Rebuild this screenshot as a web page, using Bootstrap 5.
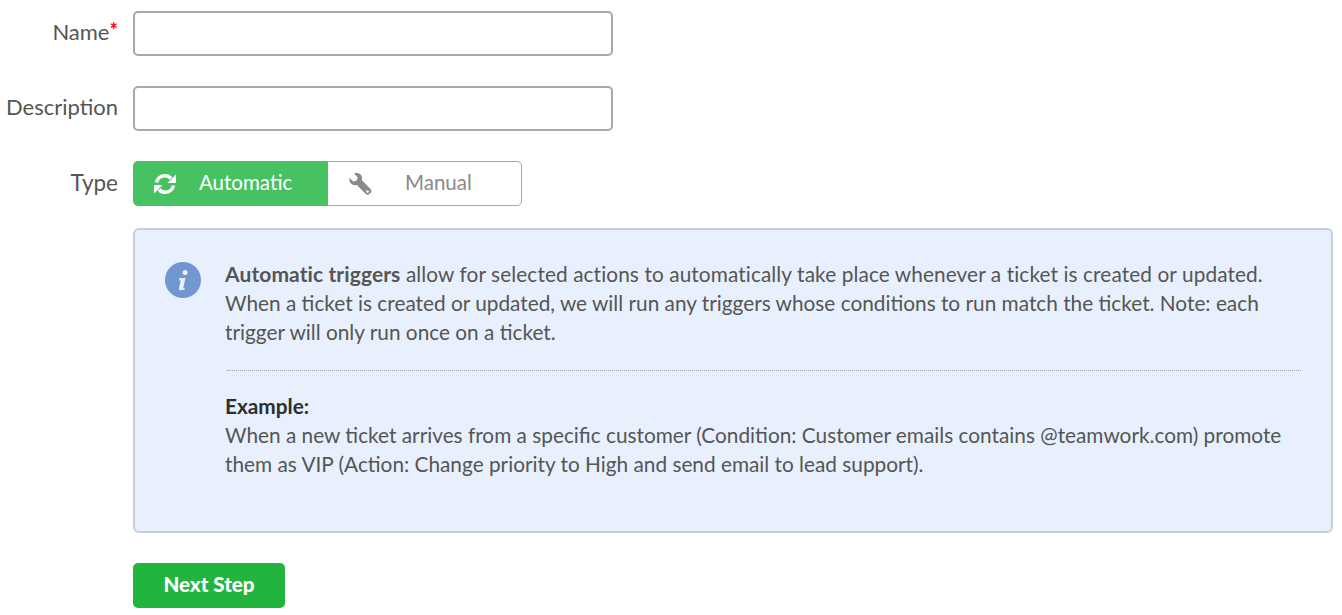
<!DOCTYPE html>
<html lang="en">
<head>
<meta charset="utf-8">
<title>Trigger</title>
<link rel="stylesheet" href="https://cdn.jsdelivr.net/npm/bootstrap@5.3.0/dist/css/bootstrap.min.css">
<style>
body{font-family:"Lato","Liberation Sans",sans-serif;color:#555;font-size:20px;background:#fff;overflow:hidden}
.page-wrap{padding:11px 9px 0 0}
.field-row{display:flex;gap:15px;margin-bottom:30px}
.field-row.type-row{margin-bottom:22px}
.field-label{width:118px;flex:none;text-align:right;font-size:22px;line-height:42px;margin:0;color:#555}
.type-row .field-label{line-height:44px;font-size:22.500px}
.req{color:#f00;font-size:20px;font-weight:700;vertical-align:2px;line-height:0}
.text-in.form-control{width:480px;height:45px;border:2px solid #a8a8a8;border-radius:5px;box-shadow:none}
.toggle-wrap{display:flex;width:389px;height:45px}
.toggle-on,.toggle-off{display:flex;align-items:center;font-size:20.500px;padding:0 0 3px}
.toggle-on{width:195px;background:#46c263;color:#fff;border-radius:5px 0 0 5px;border:0;padding-left:20px}
.toggle-off{width:194px;background:#fff;color:#8a8a8a;border:1px solid #a8a8a8;border-left:0;border-radius:0 5px 5px 0;padding-left:20px}
.toggle-on svg{margin-right:22px;margin-top:3px}
.toggle-off svg{margin-right:33px;margin-top:3px}
.info-box{margin-left:133px;width:1200px;height:305px;background:#e8f0fd;border:2px solid #c8cfdc;border-radius:6px;padding:29px 30px 0 30px;display:flex;gap:24px;margin-bottom:30px}
.info-ico{flex:none;margin-top:3px}
.info-text{font-size:20.800px;line-height:29px;color:#555;flex:1}
.info-text p{margin:0}
.info-text strong{font-weight:700;font-size:21px}
.first-line{letter-spacing:.1px}
.dot-rule{border:0;border-top:1px dotted #a0a5ac;opacity:1;margin:24px 0 20px 2px}
.ex-head{font-weight:700;color:#2e2e2e}
.next-btn.btn{margin-left:133px;width:152px;height:45px;background:#22b53e;border:0;border-radius:5px;color:#fff;font-weight:900;font-size:20.500px;padding:0 0 3px}
</style>
</head>
<body>
<form class="page-wrap">
  <div class="field-row">
    <label class="field-label" for="fn">Name<span class="req">*</span></label>
    <input id="fn" class="form-control text-in" type="text">
  </div>
  <div class="field-row">
    <label class="field-label" for="fd">Description</label>
    <input id="fd" class="form-control text-in" type="text">
  </div>
  <div class="field-row type-row">
    <div class="field-label">Type</div>
    <div class="toggle-wrap">
      <div class="toggle-on">
        <svg width="24" height="24" viewBox="0 0 24 24"><g fill="none" stroke="#fff" stroke-width="3.600"><path d="M3.500 10.500C4.300 6.500 7.800 3.800 12 3.800c2.600 0 4.600 1 6 2.700"/><path d="M20.500 13.500c-.8 4-4.300 6.700-8.500 6.700-2.600 0-4.600-1-6-2.700"/></g><path d="M23 2.500v8.500h-8.500z" fill="#fff"/><path d="M1 21.500V13h8.500z" fill="#fff"/></svg>
        <span>Automatic</span>
      </div>
      <div class="toggle-off">
        <svg width="24" height="24" viewBox="0 0 24 24" fill="#8a8a8a"><path d="M1.500 6l3.800 3.600 3.400-1 1-3.400L6 1.500c2.800-1 5.800-.3 7.200 1.700 1 1.500 1.100 3.300.5 4.900l8.800 8.800c1.200 1.200 1.200 3 0 4.200l-.7.700c-1.200 1.200-3 1.200-4.200 0L8.800 12.900c-1.700.6-3.600.4-5-.7C1.700 10.800 1 8.400 1.500 6z"/><circle cx="19.500" cy="19.500" r="1.300" fill="#fff"/></svg>
        <span>Manual</span>
      </div>
    </div>
  </div>
  <div class="info-box">
    <svg class="info-ico" width="36" height="36" viewBox="0 0 36 36"><circle cx="18" cy="18" r="18" fill="#7097cf"/><circle cx="20" cy="10.500" r="2.500" fill="#e8f0fd"/><path d="M14.500 16h6l-2.200 9.500c-.1.600.5.700 1.200.3l.4 1.400c-1.500 1-3.400 1.400-4.800 1-.9-.3-1.300-1-1.100-2l1.700-7.700-1.600-.3z" fill="#e8f0fd"/></svg>
    <div class="info-text">
      <p><span class="first-line"><strong>Automatic triggers</strong> allow for selected actions to automatically take place whenever a ticket is created or updated.</span> When a ticket is created or updated, we will run any triggers whose conditions to run match the ticket. Note: each trigger will only run once on a ticket.</p>
      <hr class="dot-rule">
      <p class="ex-head">Example:</p>
      <p>When a new ticket arrives from a specific customer (Condition: Customer emails contains @teamwork.com) promote them as VIP (Action: Change priority to High and send email to lead support).</p>
    </div>
  </div>
  <button type="button" class="btn next-btn">Next Step</button>
</form>
<script src="https://cdn.jsdelivr.net/npm/bootstrap@5.3.0/dist/js/bootstrap.bundle.min.js"></script>
</body>
</html>
